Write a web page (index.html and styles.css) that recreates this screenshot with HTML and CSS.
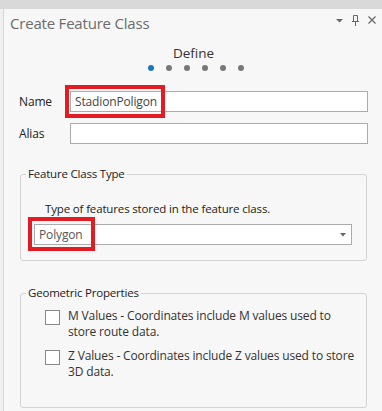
FILE: index.html
```html
<!DOCTYPE html>
<html lang="en">
<head>
  <meta charset="UTF-8">
  <meta content="width=device-width, initial-scale=1.0" name="viewport">
  <title>Create Feature Class</title>
  <link rel="stylesheet" href="styles.css">
</head>
<body>
  <div class="topbar"></div>
  <div class="pane">
    <div class="pane-header">
      <span class="pane-title">Create Feature Class</span>
      <div class="pane-tools">
        <svg width="7" height="5" viewBox="0 0 7 5"><polygon points="0,1 7,1 3.5,4.5" fill="#666"/></svg>
        <svg width="7" height="11" viewBox="0 0 7 11"><path d="M1.5 0.5h4v6h-4z M0 6.5h7 M3.5 6.5v4.5" fill="none" stroke="#666" stroke-width="1"/></svg>
        <svg width="8" height="8" viewBox="0 0 8 8"><path d="M0.5 0.5L7.5 7.5M7.5 0.5L0.5 7.5" stroke="#666" stroke-width="1.2"/></svg>
      </div>
    </div>

    <div class="steps">
      <div class="step-name">Define</div>
      <div class="dots">
        <span class="dot active"></span>
        <span class="dot"></span>
        <span class="dot"></span>
        <span class="dot"></span>
        <span class="dot"></span>
        <span class="dot"></span>
      </div>
    </div>

    <div class="form-row first-row">
      <label class="row-label">Name</label>
      <div class="field">
        <div class="text-box">StadionPoligon</div>
        <span class="mark mark-name"></span>
      </div>
    </div>
    <div class="form-row">
      <label class="row-label">Alias</label>
      <div class="field">
        <div class="text-box"></div>
      </div>
    </div>

    <fieldset class="group group-type">
      <legend>Feature Class Type</legend>
      <div class="group-body">
        <p class="hint">Type of features stored in the feature class.</p>
        <div class="field">
          <div class="combo">
            <span>Polygon</span>
            <svg width="6" height="4" viewBox="0 0 6 4"><polygon points="0,0 6,0 3,3.5" fill="#666"/></svg>
          </div>
          <span class="mark mark-type"></span>
        </div>
      </div>
    </fieldset>

    <fieldset class="group group-geom">
      <legend>Geometric Properties</legend>
      <div class="group-body">
        <label class="check">
          <span class="box"></span>
          <span>M Values - Coordinates include M values used to<br>store route data.</span>
        </label>
        <label class="check">
          <span class="box"></span>
          <span>Z Values - Coordinates include Z values used to store 3D data.</span>
        </label>
      </div>
    </fieldset>
  </div>
</body>
</html>
```

FILE: styles.css
```css
body {
    margin: 0;
    font-family: "Open Sans", "Noto Sans", sans-serif;
    font-size: 11.5px;
    letter-spacing: -0.15px;
    color: #333;
    background: #f0f0f0;
    height: 411px;
    overflow: hidden;
}
.topbar {
    height: 9px;
    background: #d9d9d9;
}
.pane {
    margin-left: 3px;
    border-left: 1px solid #d6d6d6;
    background: #f7f7f7;
    height: 402px;
    padding: 0 14px 0 15px;
}
.pane-header {
    display: flex;
    align-items: center;
    justify-content: space-between;
    height: 27px;
    margin-left: -9px;
    margin-right: -8px;
}
.pane-title {
    font-size: 15px;
    letter-spacing: -0.2px;
    color: #6b6b6b;
}
.pane-tools {
    display: flex;
    align-items: center;
    gap: 9px;
    margin-bottom: 5px;
}
.steps {
    display: flex;
    flex-direction: column;
    align-items: center;
    padding-top: 8px;
}
.step-name {
    font-size: 13.5px;
    line-height: 18px;
    letter-spacing: 0;
    color: #333;
}
.dots {
    display: flex;
    gap: 12px;
    margin-top: 3px;
    margin-left: 4px;
}
.dot {
    width: 6px;
    height: 6px;
    border-radius: 50%;
    background: #777;
}
.dot.active {
    background: #1b76be;
}
.form-row {
    display: flex;
    align-items: center;
    margin-top: 11px;
}
.form-row.first-row {
    margin-top: 20px;
}
.row-label {
    width: 51px;
    font-size: 12px;
    color: #222;
}
.field {
    position: relative;
    flex: 1;
}
.text-box {
    height: 19px;
    border: 1px solid #ababab;
    background: #fff;
    padding-left: 4px;
    line-height: 19px;
    font-size: 12px;
    color: #444;
}
.mark {
    position: absolute;
    border: 4px solid #e31c24;
    pointer-events: none;
}
.mark-name {
    left: -5px;
    top: -6px;
    width: 92px;
    height: 25px;
}
.mark-type {
    left: -6px;
    top: -7px;
    width: 59px;
    height: 26px;
}
.group {
    margin: 22px 1px 0 1px;
    padding: 0;
    border: 1px solid #d4d4d4;
    border-radius: 3px;
}
.group legend {
    margin-left: 5px;
    padding: 0 2px;
    font-size: 11.5px;
    letter-spacing: -0.2px;
    line-height: 16px;
    color: #222;
}
.group-type .group-body {
    padding: 19px 14px 15px 13px;
}
.hint {
    margin: 0 0 7px 11px;
    line-height: 16px;
    color: #222;
}
.combo {
    display: flex;
    align-items: center;
    justify-content: space-between;
    height: 19px;
    border: 1px solid #ababab;
    background: #fff;
    padding: 0 5px 0 4px;
    font-size: 12px;
    color: #555;
}
.group-geom {
    margin-top: 24px;
}
.group-geom .group-body {
    display: flex;
    flex-direction: column;
    gap: 8px;
    padding: 7px 10px 27px 24px;
}
.check {
    display: flex;
    align-items: flex-start;
    gap: 8px;
    font-size: 12px;
    line-height: 16px;
    color: #333;
}
.box {
    flex: none;
    width: 13px;
    height: 13px;
    margin-top: 2px;
    border: 1px solid #888;
    background: #fff;
}
```
